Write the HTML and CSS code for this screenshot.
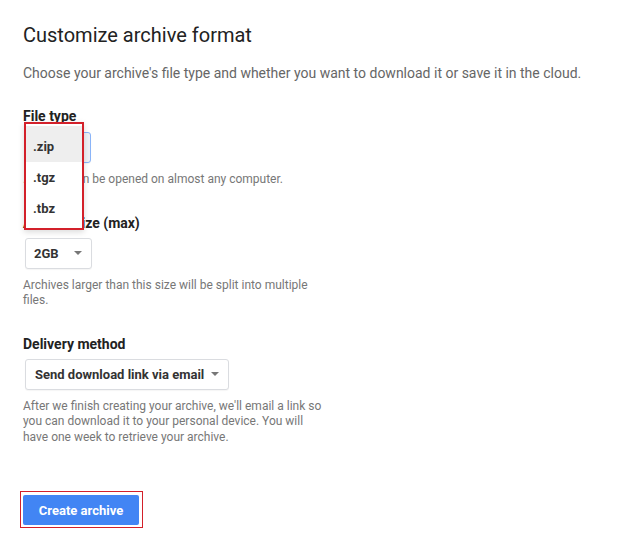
FILE: index.html
```html
<!DOCTYPE html>
<html lang="en">
<head>
<meta charset="utf-8">
<title>Customize archive format</title>
<link rel="stylesheet" href="styles.css">
</head>
<body>
<main class="page">
  <h1 class="title">Customize archive format</h1>
  <p class="subtitle">Choose your archive's file type and whether you want to download it or save it in the cloud.</p>

  <section class="field field-first">
    <h2 class="label">File type</h2>
    <div class="select-wrap">
      <div class="select select-focused select-type">
        <span class="select-text">.zip</span>
        <span class="arrow"></span>
      </div>
      <ul class="menu">
        <li class="menu-item menu-item-active">.zip</li>
        <li class="menu-item">.tgz</li>
        <li class="menu-item">.tbz</li>
      </ul>
    </div>
    <p class="help">.zip files can be opened on almost any computer.</p>
  </section>

  <section class="field">
    <h2 class="label">Archive size (max)</h2>
    <div class="select select-size">
      <span class="select-text">2GB</span>
      <span class="arrow"></span>
    </div>
    <p class="help">Archives larger than this size will be split into multiple files.</p>
  </section>

  <section class="field">
    <h2 class="label">Delivery method</h2>
    <div class="select select-delivery">
      <span class="select-text">Send download link via email</span>
      <span class="arrow"></span>
    </div>
    <p class="help">After we finish creating your archive, we'll email a link so you can download it to your personal device. You will have one week to retrieve your archive.</p>
  </section>

  <div class="action">
    <div class="highlight">
      <button class="btn" type="button">Create archive</button>
    </div>
  </div>
</main>
</body>
</html>
```

FILE: styles.css
```css
* { box-sizing: border-box; }

html, body {
  margin: 0;
  padding: 0;
  background: #ffffff;
}

body {
  font-family: Roboto, "Liberation Sans", Arial, sans-serif;
  color: #202124;
}

.page {
  padding: 21px 23px 0 23px;
}

.title {
  margin: 0;
  font-size: 20px;
  line-height: 28px;
  font-weight: 400;
  color: #222;
}

.subtitle {
  margin: 14px 0 0 0;
  font-size: 14px;
  line-height: 20px;
  color: #666;
}

.field {
  margin-top: 25px;
}

.field-first {
  margin-top: 23px;
}

.label {
  margin: 0;
  font-size: 14px;
  line-height: 20px;
  font-weight: 700;
  color: #222;
}

.select-wrap {
  position: relative;
  margin-top: 6px;
  width: 70px;
}

.select {
  display: inline-flex;
  align-items: center;
  height: 31px;
  margin-top: 5px;
  padding: 0 9px 0 8px;
  border: 1px solid #dadce0;
  border-radius: 3px;
  background: #fff;
  box-shadow: 0 1px 1px rgba(0, 0, 0, 0.04);
  font-size: 13px;
  font-weight: 700;
  color: #333;
}

.select-wrap .select {
  margin-top: 0;
}

.select-type {
  width: 67px;
  margin-left: 1px;
}

.select-focused {
  border-color: #8ab4f8;
  background: #eef1f5;
}

.select-size {
  width: 67px;
  margin-left: 2px;
}

.select-delivery {
  width: 204px;
  margin-left: 2px;
  padding-left: 9px;
}

.select-text {
  flex: 1;
  white-space: nowrap;
}

.arrow {
  width: 0;
  height: 0;
  border-left: 4px solid transparent;
  border-right: 4px solid transparent;
  border-top: 4px solid #777;
}

.menu {
  position: absolute;
  left: 1px;
  top: -10px;
  width: 60px;
  margin: 0;
  padding: 2px 0 4px 0;
  list-style: none;
  background: #fff;
  border: 2px solid #d3202a;
  box-shadow: 0 2px 6px rgba(0, 0, 0, 0.15);
}

.menu-item {
  height: 31px;
  line-height: 31px;
  padding-left: 7px;
  font-size: 13px;
  font-weight: 700;
  color: #333;
}

.menu-item-active {
  height: 36px;
  line-height: 31px;
  padding-top: 5px;
  background: #eeeeee;
}

.help {
  margin: 9px 0 0 0;
  width: 305px;
  font-size: 12px;
  line-height: 15.5px;
  color: #777;
}

.action {
  margin-top: 46px;
  margin-left: -3px;
}

.highlight {
  display: inline-block;
  padding: 3px 3px 2px 2px;
  border: 1px solid #d3202a;
}

.btn {
  display: block;
  width: 116px;
  height: 30px;
  padding: 0;
  border: none;
  border-radius: 2px;
  background: #4285f4;
  color: #fff;
  font-family: Roboto, "Liberation Sans", Arial, sans-serif;
  font-size: 13px;
  font-weight: 700;
}
```
